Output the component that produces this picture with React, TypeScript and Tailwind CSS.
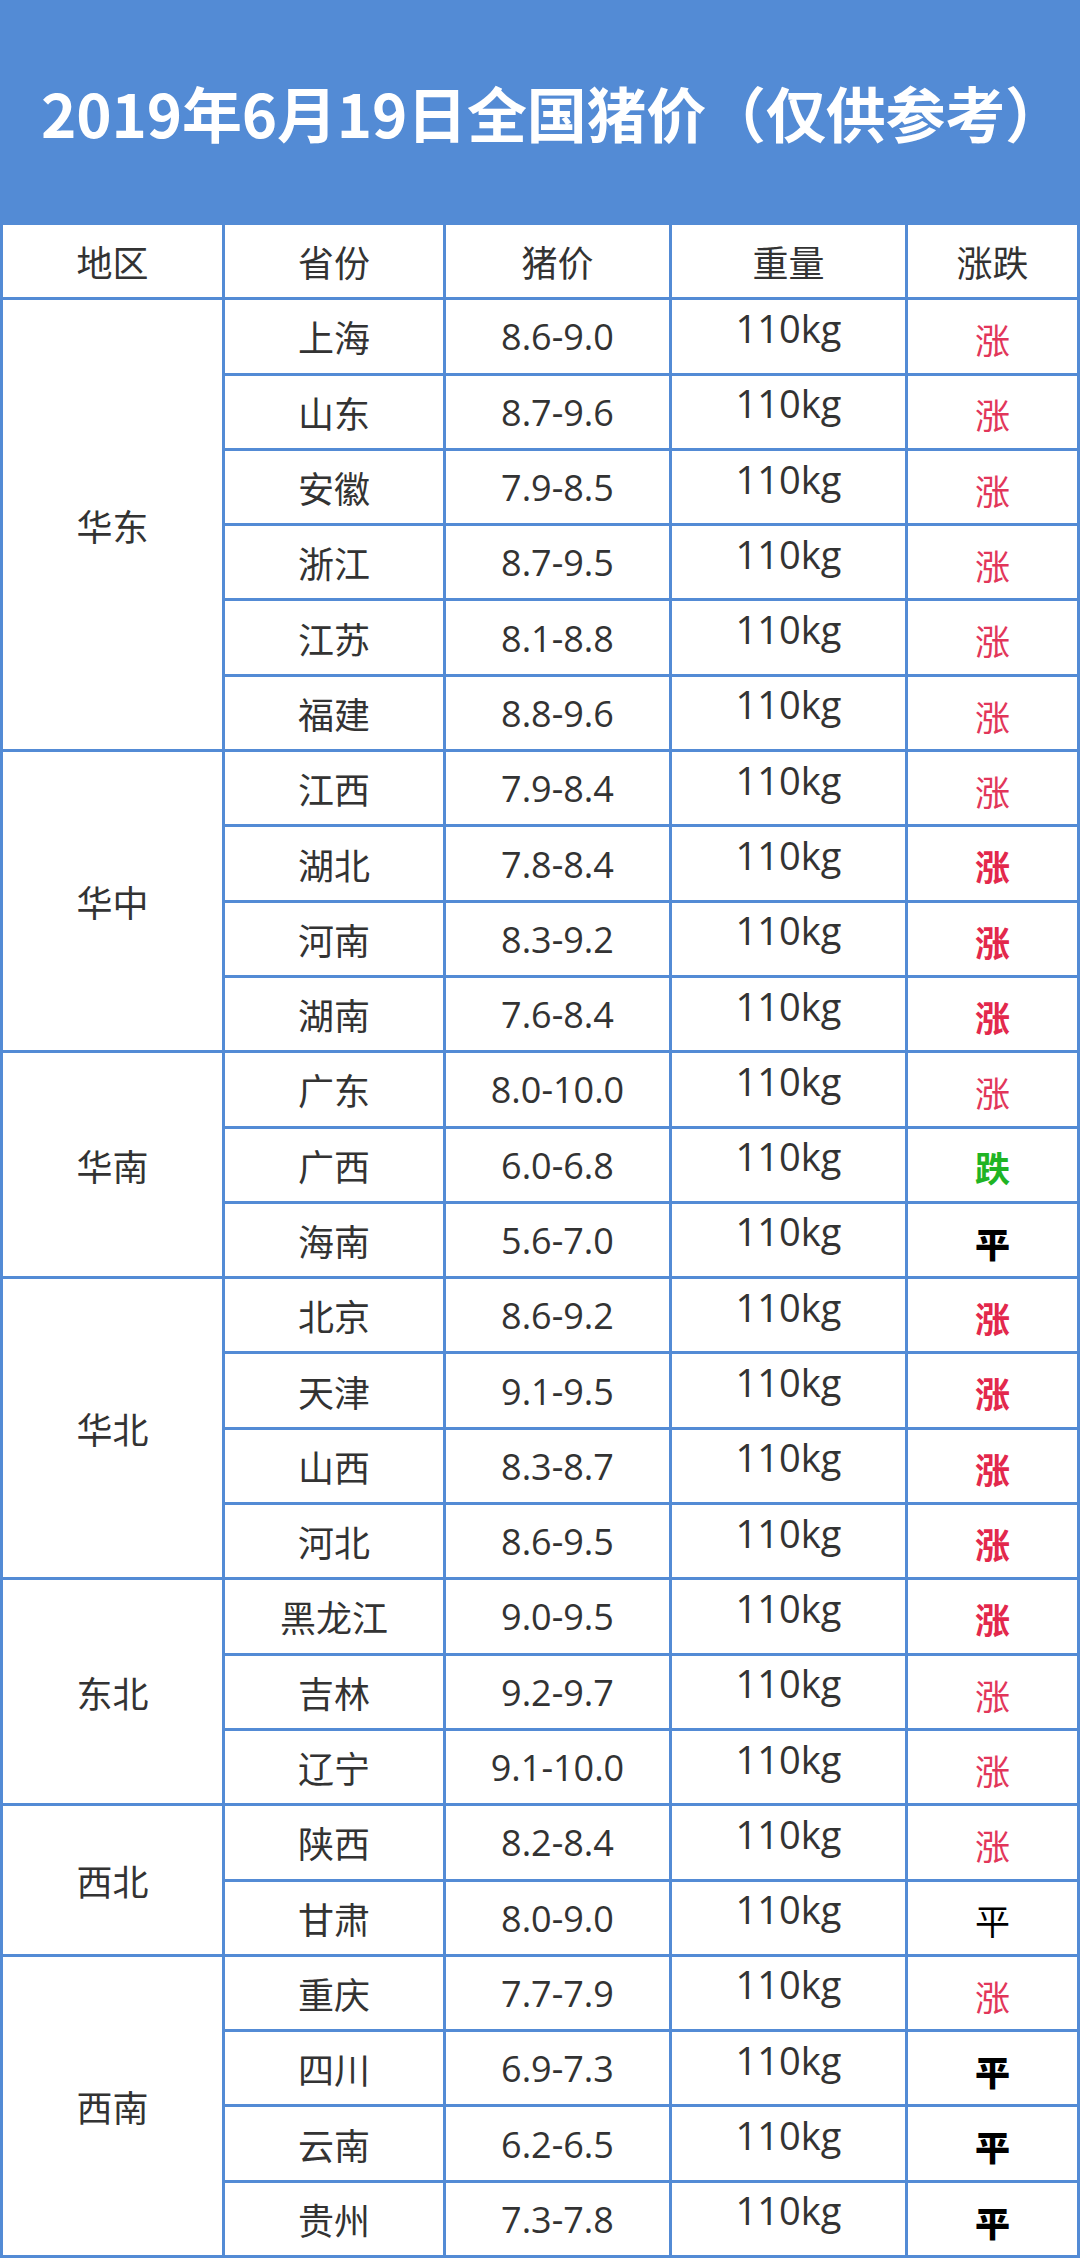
import React from "react";

type Trend = "up" | "upBold" | "down" | "flat" | "flatBold";

interface Row {
  province: string;
  price: string;
  trend: Trend;
}

interface Region {
  name: string;
  span: string;
  rows: Row[];
}

const regions: Region[] = [
  {
    name: "华东",
    span: "row-span-6",
    rows: [
      { province: "上海", price: "8.6-9.0", trend: "up" },
      { province: "山东", price: "8.7-9.6", trend: "up" },
      { province: "安徽", price: "7.9-8.5", trend: "up" },
      { province: "浙江", price: "8.7-9.5", trend: "up" },
      { province: "江苏", price: "8.1-8.8", trend: "up" },
      { province: "福建", price: "8.8-9.6", trend: "up" },
    ],
  },
  {
    name: "华中",
    span: "row-span-4",
    rows: [
      { province: "江西", price: "7.9-8.4", trend: "up" },
      { province: "湖北", price: "7.8-8.4", trend: "upBold" },
      { province: "河南", price: "8.3-9.2", trend: "upBold" },
      { province: "湖南", price: "7.6-8.4", trend: "upBold" },
    ],
  },
  {
    name: "华南",
    span: "row-span-3",
    rows: [
      { province: "广东", price: "8.0-10.0", trend: "up" },
      { province: "广西", price: "6.0-6.8", trend: "down" },
      { province: "海南", price: "5.6-7.0", trend: "flatBold" },
    ],
  },
  {
    name: "华北",
    span: "row-span-4",
    rows: [
      { province: "北京", price: "8.6-9.2", trend: "upBold" },
      { province: "天津", price: "9.1-9.5", trend: "upBold" },
      { province: "山西", price: "8.3-8.7", trend: "upBold" },
      { province: "河北", price: "8.6-9.5", trend: "upBold" },
    ],
  },
  {
    name: "东北",
    span: "row-span-3",
    rows: [
      { province: "黑龙江", price: "9.0-9.5", trend: "upBold" },
      { province: "吉林", price: "9.2-9.7", trend: "up" },
      { province: "辽宁", price: "9.1-10.0", trend: "up" },
    ],
  },
  {
    name: "西北",
    span: "row-span-2",
    rows: [
      { province: "陕西", price: "8.2-8.4", trend: "up" },
      { province: "甘肃", price: "8.0-9.0", trend: "flat" },
    ],
  },
  {
    name: "西南",
    span: "row-span-4",
    rows: [
      { province: "重庆", price: "7.7-7.9", trend: "up" },
      { province: "四川", price: "6.9-7.3", trend: "flatBold" },
      { province: "云南", price: "6.2-6.5", trend: "flatBold" },
      { province: "贵州", price: "7.3-7.8", trend: "flatBold" },
    ],
  },
];

const trendLabel: Record<Trend, string> = {
  up: "涨",
  upBold: "涨",
  down: "跌",
  flat: "平",
  flatBold: "平",
};

const trendClass: Record<Trend, string> = {
  up: "text-[#e2365a] font-normal",
  upBold: "text-[#e3284c] font-bold",
  down: "text-[#1fb424] font-bold",
  flat: "text-black font-normal",
  flatBold: "text-black font-black",
};

const cell = "flex items-center justify-center bg-white text-[36px] text-[#333333]";

export default function App() {
  return (
    <main
      className="w-[1080px] bg-[#538bd5]"
      style={{ fontFamily: '"Open Sans", "Noto Sans CJK SC", sans-serif' }}
    >
      <header className="flex h-[225px] items-center justify-center pb-[2px] pl-[26px]">
        <h1
          className="text-[60px] font-bold leading-none tracking-[-0.2px] text-white"
          style={{ fontFamily: '"Noto Sans CJK SC", sans-serif' }}
        >
          2019年6月19日全国猪价（仅供参考）
        </h1>
      </header>

      <div className="grid h-[2033px] grid-cols-[219px_218px_223px_233px_1fr] grid-rows-[repeat(27,minmax(0,1fr))] gap-[3px] px-[3px] pb-[3px]">
        {["地区", "省份", "猪价", "重量", "涨跌"].map((h) => (
          <div key={h} className={cell} style={{ fontFamily: '"Noto Sans CJK SC", sans-serif' }}>
            {h}
          </div>
        ))}

        {regions.map((region) => (
          <React.Fragment key={region.name}>
            <div
              className={`${cell} ${region.span}`}
              style={{ fontFamily: '"Noto Sans CJK SC", sans-serif' }}
            >
              {region.name}
            </div>
            {region.rows.map((r) => (
              <React.Fragment key={r.province}>
                <div className={cell} style={{ fontFamily: '"Noto Sans CJK SC", sans-serif' }}>
                  {r.province}
                </div>
                <div className={cell}>
                  <span className="pt-[2px]">{r.price}</span>
                </div>
                <div className={cell}>
                  <span className="-mt-[16px] text-[38px]">110kg</span>
                </div>
                <div className={cell}>
                  <span
                    className={`mt-[6px] text-[35px] ${trendClass[r.trend]}`}
                    style={{ fontFamily: '"Noto Sans CJK SC", sans-serif' }}
                  >
                    {trendLabel[r.trend]}
                  </span>
                </div>
              </React.Fragment>
            ))}
          </React.Fragment>
        ))}
      </div>
    </main>
  );
}
